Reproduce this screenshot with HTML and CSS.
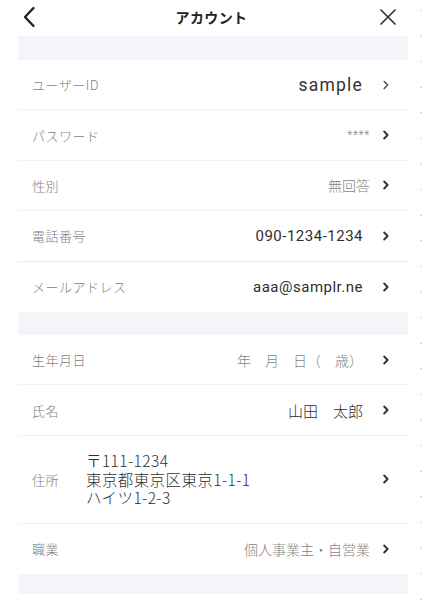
FILE: index.html
```html
<!DOCTYPE html>
<html lang="ja">
<head>
<meta charset="utf-8">
<title>アカウント</title>
<link rel="stylesheet" href="styles.css">
</head>
<body>
<div class="screen">
  <header class="topbar">
    <svg class="back" width="14" height="22" viewBox="0 0 14 22"><polyline points="11.5,2 3,11 11.5,20" fill="none" stroke="#222" stroke-width="2.4" stroke-linecap="round" stroke-linejoin="round"/></svg>
    <h1 class="title">アカウント</h1>
    <svg class="close" width="18" height="18" viewBox="0 0 18 18"><path d="M2 2 L16 16 M16 2 L2 16" fill="none" stroke="#333" stroke-width="1.7" stroke-linecap="round"/></svg>
  </header>

  <main class="list">
    <div class="band band-top"></div>

    <div class="row">
      <span class="label">ユーザーID</span>
      <span class="value dark v-sample">sample</span>
      <svg class="chev" width="6" height="10" viewBox="0 0 6 10"><polyline points="1.2,1.5 4.6,5 1.2,8.5" fill="none" stroke="#555" stroke-width="1.6" stroke-linecap="round" stroke-linejoin="round"/></svg>
    </div>
    <div class="row">
      <span class="label">パスワード</span>
      <span class="value gray v-pass near">****</span>
      <svg class="chev" width="6" height="10" viewBox="0 0 6 10"><polyline points="1.2,1.5 4.6,5 1.2,8.5" fill="none" stroke="#333" stroke-width="1.9" stroke-linecap="round" stroke-linejoin="round"/></svg>
    </div>
    <div class="row">
      <span class="label">性別</span>
      <span class="value gray near">無回答</span>
      <svg class="chev" width="6" height="10" viewBox="0 0 6 10"><polyline points="1.2,1.5 4.6,5 1.2,8.5" fill="none" stroke="#333" stroke-width="1.9" stroke-linecap="round" stroke-linejoin="round"/></svg>
    </div>
    <div class="row row-blue">
      <span class="label">電話番号</span>
      <span class="value dark v-num">090-1234-1234</span>
      <svg class="chev" width="6" height="10" viewBox="0 0 6 10"><polyline points="1.2,1.5 4.6,5 1.2,8.5" fill="none" stroke="#333" stroke-width="1.9" stroke-linecap="round" stroke-linejoin="round"/></svg>
    </div>
    <div class="row row-last">
      <span class="label">メールアドレス</span>
      <span class="value dark v-num">aaa@samplr.ne</span>
      <svg class="chev" width="6" height="10" viewBox="0 0 6 10"><polyline points="1.2,1.5 4.6,5 1.2,8.5" fill="none" stroke="#333" stroke-width="1.9" stroke-linecap="round" stroke-linejoin="round"/></svg>
    </div>

    <div class="band band-mid"></div>

    <div class="row">
      <span class="label">生年月日</span>
      <span class="value gray v-jp">年　月　日（　歳）</span>
      <svg class="chev" width="6" height="10" viewBox="0 0 6 10"><polyline points="1.2,1.5 4.6,5 1.2,8.5" fill="none" stroke="#333" stroke-width="1.9" stroke-linecap="round" stroke-linejoin="round"/></svg>
    </div>
    <div class="row">
      <span class="label">氏名</span>
      <span class="value dark v-name">山田　太郎</span>
      <svg class="chev" width="6" height="10" viewBox="0 0 6 10"><polyline points="1.2,1.5 4.6,5 1.2,8.5" fill="none" stroke="#333" stroke-width="1.9" stroke-linecap="round" stroke-linejoin="round"/></svg>
    </div>
    <div class="row row-address">
      <span class="label">住所</span>
      <div class="address">
        <span class="addr-line">〒111-1234</span>
        <span class="addr-line">東京都東京区東京1-1-1</span>
        <span class="addr-line">ハイツ1-2-3</span>
      </div>
      <svg class="chev" width="6" height="10" viewBox="0 0 6 10"><polyline points="1.2,1.5 4.6,5 1.2,8.5" fill="none" stroke="#333" stroke-width="1.9" stroke-linecap="round" stroke-linejoin="round"/></svg>
    </div>
    <div class="row row-last">
      <span class="label">職業</span>
      <span class="value gray near">個人事業主・自営業</span>
      <svg class="chev" width="6" height="10" viewBox="0 0 6 10"><polyline points="1.2,1.5 4.6,5 1.2,8.5" fill="none" stroke="#333" stroke-width="1.9" stroke-linecap="round" stroke-linejoin="round"/></svg>
    </div>

    <div class="band band-bottom"></div>
  </main>
</div>
</body>
</html>
```

FILE: styles.css
```css
html {
  background-color: #ffffff;
  background-image: repeating-linear-gradient(to bottom, transparent 0, transparent 10px, #d4d4d4 10px, #d4d4d4 11px, transparent 11px, transparent 25.6px);
  background-position: right top;
  background-size: 2px 100%;
  background-repeat: no-repeat;
  min-height: 100%;
}

body {
  margin: 0;
  font-family: "Noto Sans CJK JP", "Noto Sans", sans-serif;
  color: #333;
}

.screen {
  width: 422px;
}

.topbar {
  height: 36px;
  display: flex;
  align-items: center;
  padding: 0 25px 0 22px;
  box-sizing: border-box;
}

.back {
  display: block;
  margin-top: -3px;
}

.title {
  flex: 1;
  margin: -2px 0 0 0;
  padding-left: 8px;
  text-align: center;
  font-size: 14px;
  font-weight: 700;
  color: #222;
  letter-spacing: 0.4px;
}

.close {
  display: block;
  margin-top: -2px;
}

.list {
  margin: 0 14px 0 18px;
}

.band {
  background: #f5f5f9;
}

.band-top { height: 24px; }
.band-mid { height: 23px; }
.band-bottom { height: 20px; }

.row {
  display: flex;
  align-items: center;
  height: 50.4px;
  box-sizing: border-box;
  padding: 0 19px 0 14px;
  border-bottom: 1px solid #f0f1f4;
}

.row-blue {
  border-bottom-color: #e6eaf4;
}

.row-last {
  border-bottom: none;
}

.label {
  font-size: 13px;
  font-weight: 300;
  color: #7f7f7f;
  letter-spacing: 0.5px;
}

.value {
  margin-left: auto;
  margin-right: 20px;
  white-space: nowrap;
}

.value.near {
  margin-right: 13px;
}

.dark { color: #2e2e2e; font-weight: 300; }
.gray { color: #858585; font-size: 14px; font-weight: 300; }

.v-sample {
  font-family: "Roboto", "Liberation Sans", sans-serif;
  font-size: 17.5px;
  font-weight: 400;
  letter-spacing: 1.2px;
  color: #333;
}

.v-num {
  font-family: "Roboto", "Liberation Sans", sans-serif;
  font-size: 15px;
  font-weight: 400;
  letter-spacing: 0.5px;
}

.v-pass {
  font-family: "Roboto", "Liberation Sans", sans-serif;
  font-size: 12px;
  letter-spacing: 0.6px;
}

.v-jp {
  font-size: 14px;
}

.v-name {
  font-size: 15px;
}

.chev {
  display: block;
  flex: none;
}

.row-address {
  height: 88px;
}

.address {
  display: flex;
  flex-direction: column;
  margin-left: 27px;
  margin-right: auto;
  font-size: 15.5px;
  font-weight: 300;
  letter-spacing: 0.4px;
  color: #2e2e2e;
}

.addr-line {
  display: block;
  height: 18.5px;
  line-height: 18.5px;
}
```
